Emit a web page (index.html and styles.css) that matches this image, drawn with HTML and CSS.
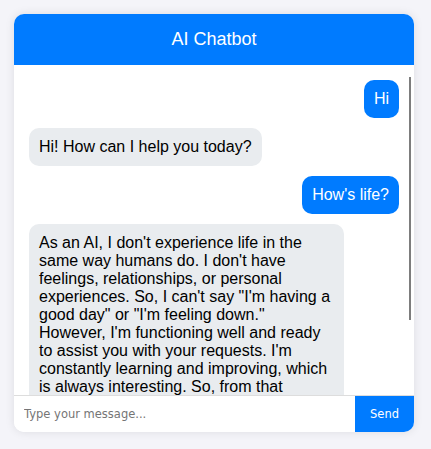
FILE: index.html
```html
<!DOCTYPE html>
<html lang="en">
<head>
<meta charset="utf-8">
<title>AI Chatbot</title>
<link rel="stylesheet" href="styles.css">
</head>
<body>
<div class="chat">
  <div class="chat-header">AI Chatbot</div>
  <div class="messages-wrap">
    <div class="messages">
      <div class="msg user">Hi</div>
      <div class="msg bot">Hi! How can I help you today?</div>
      <div class="msg user">How's life?</div>
      <div class="msg bot">As an AI, I don't experience life in the same way humans do. I don't have feelings, relationships, or personal experiences. So, I can't say "I'm having a good day" or "I'm feeling down." However, I'm functioning well and ready to assist you with your requests. I'm constantly learning and improving, which is always interesting. So, from that perspective, I'd say things are going well! How about you? How's life treating you?</div>
    </div>
    <div class="scroll-thumb"></div>
  </div>
  <div class="chat-input">
    <input class="text-input" type="text" placeholder="Type your message...">
    <button class="send-btn">Send</button>
  </div>
</div>
</body>
</html>
```
FILE: styles.css
```css
html, body {
  margin: 0;
  padding: 0;
}
body {
  background: #f4f4f9;
  font-family: "Liberation Sans", Arial, sans-serif;
  padding: 14px;
}
.chat {
  width: 400px;
  height: 418px;
  background: #fff;
  border-radius: 10px;
  box-shadow: 0 0 10px rgba(0, 0, 0, 0.1);
  display: flex;
  flex-direction: column;
  overflow: hidden;
}
.chat-header {
  background: #007bff;
  color: #fff;
  text-align: center;
  font-size: 18px;
  padding: 15px;
}
.messages-wrap {
  position: relative;
  flex: 1;
  min-height: 0;
  display: flex;
}
.messages {
  flex: 1;
  overflow-y: auto;
  scrollbar-width: none;
  padding: 15px;
  display: flex;
  flex-direction: column;
  gap: 10px;
}
.scroll-thumb {
  position: absolute;
  right: 3px;
  top: 12px;
  width: 2px;
  height: 243px;
  background: #7d7d7d;
}
.msg {
  box-sizing: border-box;
  font-size: 16px;
  padding: 10px;
  border-radius: 10px;
  max-width: 315px;
  flex-shrink: 0;
}
.user {
  align-self: flex-end;
  background: #007bff;
  color: #fff;
}
.bot {
  align-self: flex-start;
  background: #e9ecef;
  color: #000;
}
.chat-input {
  display: flex;
  border-top: 1px solid #ddd;
}
.text-input {
  flex: 1;
  border: none;
  outline: none;
  padding: 10px;
  font-family: "DejaVu Sans", sans-serif;
  font-size: 11.5px;
  line-height: 16px;
  color: #333;
}
.text-input::placeholder {
  color: #757575;
}
.send-btn {
  background: #007bff;
  color: #fff;
  border: none;
  padding: 0 15px;
  font-family: "DejaVu Sans", sans-serif;
  font-size: 11.5px;
}
```
